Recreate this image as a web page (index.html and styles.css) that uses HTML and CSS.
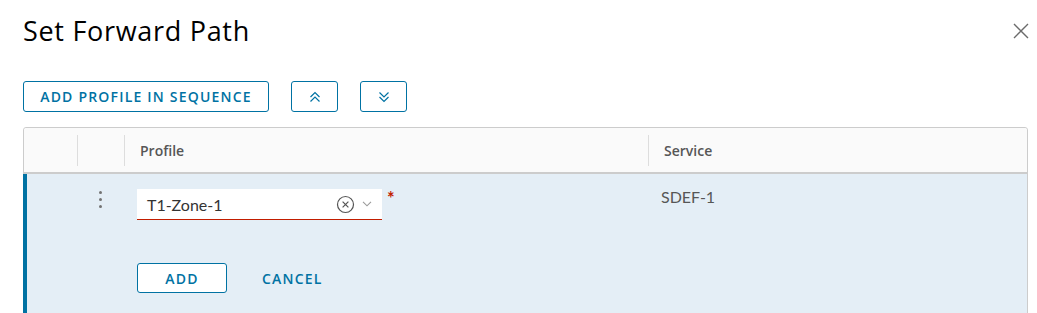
FILE: index.html
```html
<!DOCTYPE html>
<html lang="en">
<head>
  <meta charset="UTF-8">
  <meta name="viewport" content="width=device-width, initial-scale=1.0">
  <title>Set Forward Path</title>
  <link rel="stylesheet" href="styles.css">
</head>
<body>
  <div class="modal-header">
    <h3 class="modal-title">Set Forward Path</h3>
    <button class="close" aria-label="Close">
      <svg width="16" height="16" viewBox="0 0 16 16"><path d="M1 1 L15 15 M15 1 L1 15" stroke="#6b6b6b" stroke-width="1.4" fill="none"/></svg>
    </button>
  </div>

  <div class="toolbar">
    <button class="btn btn-wide">ADD PROFILE IN SEQUENCE</button>
    <button class="btn btn-icon" aria-label="Move up">
      <svg width="12" height="12" viewBox="0 0 12 12"><path d="M1.5 6 L6 1.5 L10.5 6 M1.5 10.5 L6 6 L10.5 10.5" stroke="#0072a3" stroke-width="1.2" fill="none"/></svg>
    </button>
    <button class="btn btn-icon" aria-label="Move down">
      <svg width="12" height="12" viewBox="0 0 12 12"><path d="M1.5 1.5 L6 6 L10.5 1.5 M1.5 6 L6 10.5 L10.5 6" stroke="#0072a3" stroke-width="1.2" fill="none"/></svg>
    </button>
  </div>

  <div class="datagrid">
    <div class="grid-head">
      <div class="col"></div>
      <div class="col sep"></div>
      <div class="col sep">Profile</div>
      <div class="col sep">Service</div>
    </div>
    <div class="grid-row">
      <div class="col"></div>
      <div class="col kebab">
        <span></span><span></span><span></span>
      </div>
      <div class="col edit-cell">
        <div class="field">
          <div class="select">
            <span class="value">T1-Zone-1</span>
            <svg class="clear" width="19" height="19" viewBox="0 0 19 19"><circle cx="9.5" cy="9.5" r="8" stroke="#555" stroke-width="1.2" fill="none"/><path d="M6.6 6.6 L12.4 12.4 M12.4 6.6 L6.6 12.4" stroke="#555" stroke-width="1.2"/></svg>
            <svg class="caret" width="10" height="6" viewBox="0 0 10 6"><path d="M1 0.8 L5 4.8 L9 0.8" stroke="#9a9a9a" stroke-width="1.1" fill="none"/></svg>
          </div>
          <span class="required">*</span>
        </div>
        <div class="actions">
          <button class="btn btn-add">ADD</button>
          <button class="btn-link">CANCEL</button>
        </div>
      </div>
      <div class="col service">SDEF-1</div>
    </div>
  </div>
</body>
</html>
```

FILE: styles.css
```css
body {
  margin: 0;
  padding: 0 9px 0 23px;
  font-family: Lato, "Noto Sans", sans-serif;
  background-color: #fff;
  overflow: hidden;
  height: 313px;
}
.modal-header {
  display: flex;
  justify-content: space-between;
  align-items: center;
  padding-top: 13px;
  height: 36px;
}
.modal-title {
  margin: 0;
  font-family: "Open Sans", sans-serif;
  font-size: 27px;
  font-weight: 400;
  line-height: 36px;
  color: #000;
  letter-spacing: 0.7px;
}
.close {
  border: none;
  background: none;
  padding: 0;
  margin-right: -2px;
  width: 18px;
  height: 18px;
  display: flex;
  align-items: center;
  justify-content: center;
}
.toolbar {
  display: flex;
  gap: 22px;
  margin-top: 32px;
}
.btn {
  height: 31px;
  border: 1px solid #0072a3;
  border-radius: 3px;
  background: #fff;
  color: #0072a3;
  font-family: "Open Sans", sans-serif;
  font-size: 14px;
  font-weight: 600;
  letter-spacing: 1.2px;
  padding: 0;
  display: flex;
  align-items: center;
  justify-content: center;
}
.btn-wide {
  width: 246px;
}
.btn-icon {
  width: 47px;
}
.datagrid {
  margin-top: 15px;
  border: 1px solid #ccc;
  border-radius: 3px;
  height: 260px;
}
.grid-head,
.grid-row {
  display: grid;
  grid-template-columns: 53px 47px 524px 1fr;
}
.grid-head {
  height: 44px;
  background: #fafafa;
  border-bottom: 2px solid #ccc;
  border-radius: 3px 3px 0 0;
  align-items: center;
  font-family: "Open Sans", sans-serif;
  font-size: 14px;
  font-weight: 600;
  color: #565656;
}
.grid-head .col {
  height: 31px;
  display: flex;
  align-items: center;
}
.grid-head .sep {
  border-left: 1px solid #ddd;
  padding-left: 15px;
}
.grid-row {
  background: #e4eef6;
  margin-left: -1px;
  border-left: 4px solid #0072a3;
  height: 214px;
  grid-template-columns: 50px 47px 524px 1fr;
}
.kebab {
  display: flex;
  flex-direction: column;
  align-items: center;
  gap: 4px;
  padding-top: 17px;
}
.kebab span {
  width: 3px;
  height: 3px;
  border-radius: 50%;
  background: #737373;
}
.edit-cell {
  padding: 15px 0 0 13px;
}
.field {
  display: flex;
  align-items: flex-start;
  gap: 5px;
}
.select {
  width: 245px;
  height: 31px;
  box-sizing: border-box;
  background: #fff;
  border-bottom: 1px solid #c21d00;
  display: flex;
  align-items: center;
  padding: 0 10px 0 10px;
  font-size: 16px;
  color: #333;
}
.select .value {
  flex: 1;
}
.select .clear {
  margin-right: 7px;
}
.required {
  color: #c21d00;
  font-size: 18px;
  font-weight: 700;
  line-height: 16px;
  margin-top: 1px;
}
.actions {
  display: flex;
  align-items: center;
  gap: 18px;
  margin-top: 43px;
}
.btn-add {
  width: 90px;
  height: 30px;
}
.btn-link {
  border: none;
  background: none;
  color: #0072a3;
  font-family: "Open Sans", sans-serif;
  font-size: 14px;
  font-weight: 600;
  letter-spacing: 1.2px;
  padding: 0 17px;
}
.service {
  padding: 14px 0 0 13px;
  font-size: 16px;
  color: #565656;
  line-height: 17px;
}
```
